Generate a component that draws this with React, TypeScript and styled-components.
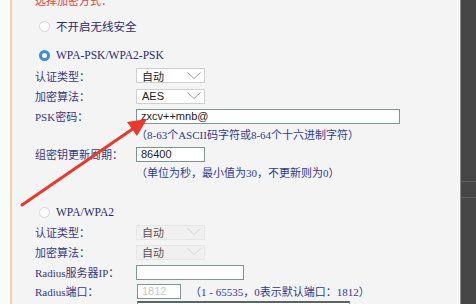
import styled, { createGlobalStyle } from "styled-components";

const GlobalStyle = createGlobalStyle`
  html, body {
    margin: 0;
    padding: 0;
    overflow: hidden;
    background: #f4f4f4;
  }
`;

const cjk = `"Liberation Serif", "Noto Sans CJK SC", serif`;
const sans = `"Liberation Sans", "Noto Sans CJK SC", sans-serif`;

const Page = styled.div`
  position: relative;
  display: flex;
  width: 476px;
  height: 304px;
  overflow: hidden;
`;

const Gutter = styled.div`
  width: 10px;
  background: #fafafa;
  border-right: 2px solid #ecd2a6;
`;

const Main = styled.div`
  flex: 1;
  background: #f4f4f4;
  padding-left: 23px;
  font-family: ${cjk};
  font-size: 11px;
  color: #38387c;
`;

const SidePanel = styled.div`
  width: 15px;
  background: #464646;
  border-left: 1px solid #8c8c8c;
  display: flex;
  flex-direction: column;
`;

const SideLine = styled.div<{ $top: number }>`
  margin-top: ${(p) => p.$top}px;
  height: 1px;
  background: #5e5e5e;
`;

const Heading = styled.div`
  margin-top: -5px;
  height: 12px;
  line-height: 12px;
  color: #e0453a;
  font-size: 11px;
`;

const RadioRow = styled.label<{ $top: number }>`
  display: flex;
  align-items: center;
  gap: 6px;
  height: 12px;
  margin-top: ${(p) => p.$top}px;
  padding-left: 4px;
  font-size: 11.5px;
  color: #2b2b6a;
`;

const Radio = styled.span<{ $on?: boolean }>`
  box-sizing: border-box;
  width: 11px;
  height: 11px;
  border-radius: 50%;
  background: #fff;
  border: ${(p) => (p.$on ? "3px solid #3f8edb" : "1px solid #d6d6d6")};
`;

const Row = styled.div<{ $h?: number; $top?: number }>`
  display: flex;
  align-items: center;
  height: ${(p) => p.$h ?? 20}px;
  margin-top: ${(p) => p.$top ?? 0}px;
`;

const Label = styled.div`
  width: 101px;
  white-space: nowrap;
`;

const Hint = styled.div`
  height: 18px;
  line-height: 18px;
  padding-left: 101px;
  color: #2c3c8e;
  white-space: nowrap;
`;

const Select = styled.div<{ $disabled?: boolean }>`
  box-sizing: border-box;
  display: flex;
  align-items: center;
  justify-content: space-between;
  width: 69px;
  height: 15px;
  padding: 0 3px 0 5px;
  background: ${(p) => (p.$disabled ? "#f0f0f0" : "#fff")};
  border: 1px solid ${(p) => (p.$disabled ? "#e6e6e6" : "#cfcfcf")};
  font-family: ${sans};
  font-size: 11px;
  color: ${(p) => (p.$disabled ? "#555" : "#222")};
`;

const Input = styled.div<{ $w: number; $disabled?: boolean; $left?: number }>`
  box-sizing: border-box;
  display: flex;
  align-items: center;
  width: ${(p) => p.$w}px;
  height: 15px;
  margin-left: ${(p) => p.$left ?? 0}px;
  padding-left: 4px;
  background: #fff;
  border: 1px solid #7f958f;
  font-family: ${sans};
  font-size: 11px;
  color: ${(p) => (p.$disabled ? "#c8c8c8" : "#222")};
`;

const BottomInput = styled.div`
  box-sizing: border-box;
  width: 213px;
  height: 8px;
  margin-left: 102px;
  margin-top: 1px;
  border-top: 2px solid #5a6664;
  border-left: 1px solid #7f958f;
  border-right: 1px solid #7f958f;
  background: #fff;
`;

const PortHint = styled.span`
  margin-left: 9px;
  color: #2c3c8e;
  white-space: nowrap;
`;

const Overlay = styled.svg`
  position: absolute;
  left: 0;
  top: 0;
  pointer-events: none;
`;

const Chevron = ({ light }: { light?: boolean }) => (
  <svg width="14" height="8" viewBox="0 0 14 8">
    <polyline
      points="0.5,0.5 7,6.5 13.5,0.5"
      fill="none"
      stroke={light ? "#d4d4d4" : "#9a9a9a"}
      strokeWidth="1"
    />
  </svg>
);

const App: React.FC = () => {
  return (
    <>
      <GlobalStyle />
      <Page>
        <Gutter />
        <Main>
          <Heading>选择加密方式：</Heading>

          <RadioRow $top={13}>
            <Radio />
            不开启无线安全
          </RadioRow>

          <RadioRow $top={17}>
            <Radio $on />
            WPA-PSK/WPA2-PSK
          </RadioRow>

          <Row $h={21} $top={4}>
            <Label>认证类型：</Label>
            <Select>
              自动
              <Chevron />
            </Select>
          </Row>
          <Row>
            <Label>加密算法：</Label>
            <Select>
              AES
              <Chevron />
            </Select>
          </Row>
          <Row>
            <Label>PSK密码：</Label>
            <Input $w={264}>zxcv++mnb@</Input>
          </Row>
          <Hint>（8-63个ASCII码字符或8-64个十六进制字符）</Hint>
          <Row>
            <Label>组密钥更新周期：</Label>
            <Input $w={69}>86400</Input>
          </Row>
          <Hint>（单位为秒，最小值为30，不更新则为0）</Hint>

          <RadioRow $top={24}>
            <Radio />
            WPA/WPA2
          </RadioRow>

          <Row $top={4}>
            <Label>认证类型：</Label>
            <Select $disabled>
              自动
              <Chevron light />
            </Select>
          </Row>
          <Row>
            <Label>加密算法：</Label>
            <Select $disabled>
              自动
              <Chevron light />
            </Select>
          </Row>
          <Row>
            <Label>Radius服务器IP：</Label>
            <Input $w={108} />
          </Row>
          <Row $h={18}>
            <Label>Radius端口：</Label>
            <Input $w={44} $left={1} $disabled>
              1812
            </Input>
            <PortHint>（1 - 65535，0表示默认端口：1812）</PortHint>
          </Row>
          <BottomInput />
        </Main>
        <SidePanel>
          <SideLine $top={181} />
          <SideLine $top={15} />
        </SidePanel>

        <Overlay width="476" height="304" viewBox="0 0 476 304">
          <line
            x1="22"
            y1="205"
            x2="134"
            y2="128"
            stroke="#e8392f"
            strokeWidth="3"
            strokeLinecap="round"
          />
          <polygon points="147,119 127,122 137,136" fill="#e8392f" />
        </Overlay>
      </Page>
    </>
  );
};

export default App;
